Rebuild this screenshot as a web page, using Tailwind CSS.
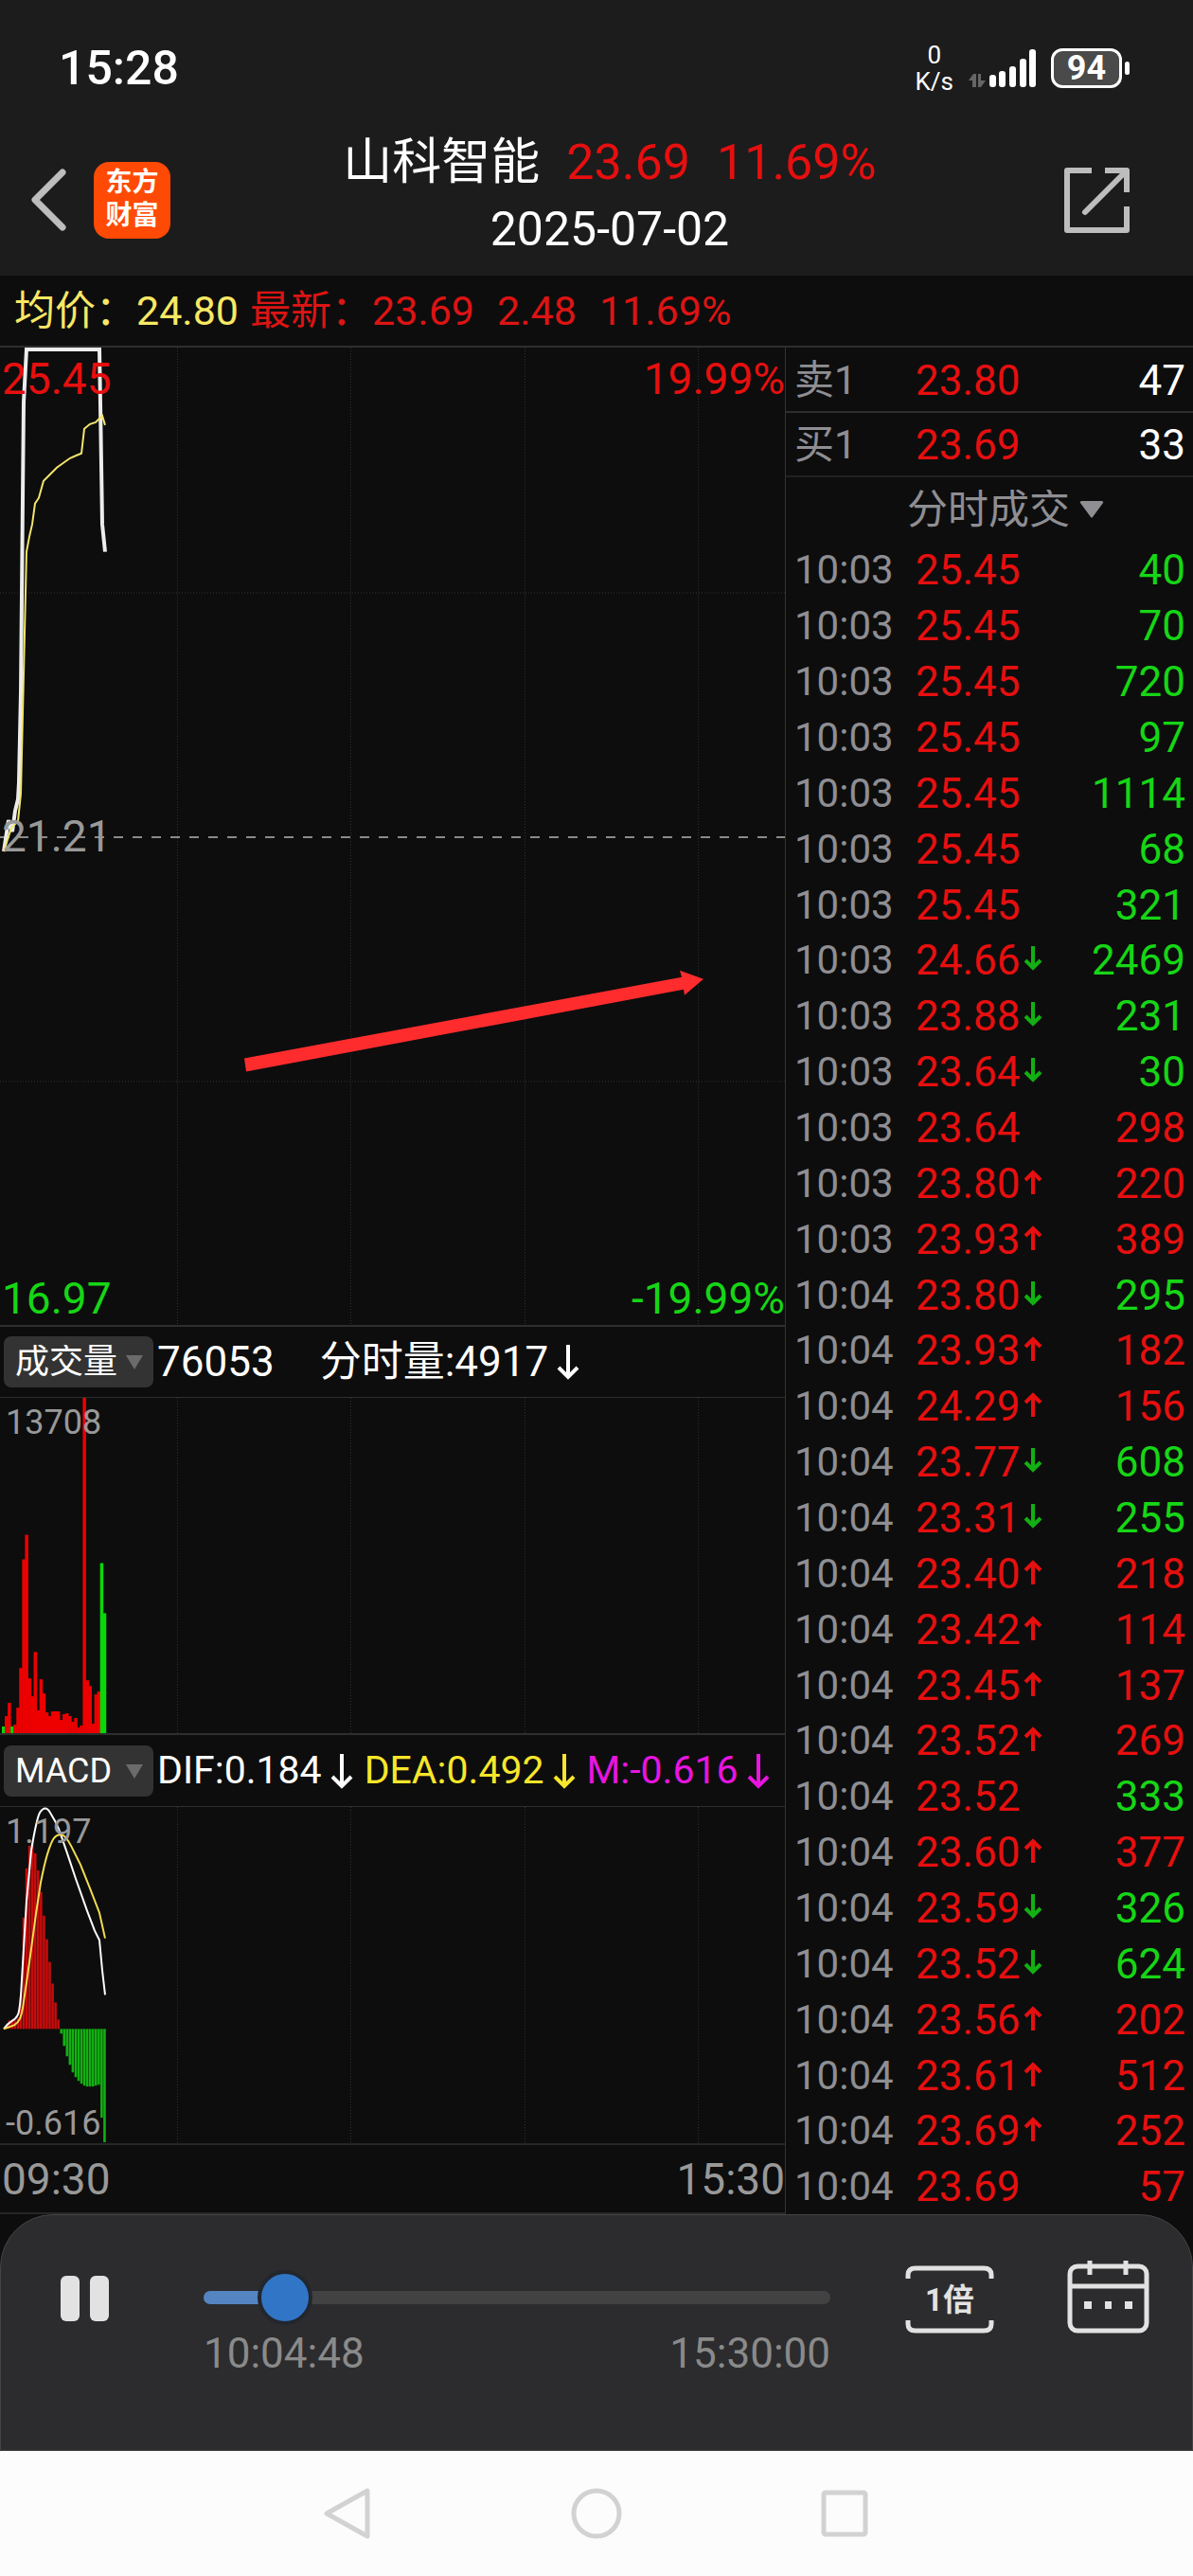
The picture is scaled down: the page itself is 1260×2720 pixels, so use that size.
<!DOCTYPE html>
<html lang="zh-CN">
<head>
  <meta charset="UTF-8" />
  <meta name="viewport" content="width=device-width, initial-scale=1.0" />
  <title>山科智能 分时回放</title>
  <script src="https://cdn.jsdelivr.net/npm/@tailwindcss/browser@4"></script>
</head>
<body class="bg-[#0d0d0d] text-white font-['Roboto','Noto_Sans_CJK_SC',sans-serif] text-[44px] leading-none">

  <header class="bg-[#1c1c1c] h-[291px]">
    <!-- status bar -->
    <div class="flex items-center justify-between h-[144px] pl-[62px] pr-[67px]">
      <span class="text-[50px] font-medium">15:28</span>
      <div class="flex items-center">
        <div class="flex flex-col items-center gap-[2px] text-[26px] leading-[26px] mr-4">
          <span>0</span>
          <span>K/s</span>
        </div>
        <svg class="w-[72px] h-[42px] mr-[15px]" viewBox="0 0 72 42" fill="#fff">
          <path d="M0 34L5 27H8V41H4V34ZM10 27H13V34H18L13 41H10Z" fill="#666" />
          <rect x="22" y="28" width="7" height="13" rx="3" />
          <rect x="32" y="24" width="7" height="17" rx="3" />
          <rect x="43" y="19" width="7" height="22" rx="3" />
          <rect x="54" y="11" width="7" height="30" rx="3" />
          <rect x="64" y="1" width="7" height="40" rx="3" />
        </svg>
        <div class="flex items-center justify-center w-[75px] h-[42px] rounded-[12px] border-[3px] border-white bg-[#4a4a4a] text-[36px] font-bold">94</div>
        <div class="w-[5px] h-[14px] ml-[3px] rounded-full bg-white"></div>
      </div>
    </div>
    <!-- title bar -->
    <div class="flex items-center pl-[33px] pr-[67px] h-[134px]">
      <button aria-label="返回" class="mr-[28px]">
        <svg class="w-[38px] h-[66px] block" viewBox="0 0 38 66" fill="none" stroke="#bdbdbd" stroke-width="7" stroke-linecap="round" stroke-linejoin="round"><path d="M33 4L4 33l29 29" /></svg>
      </button>
      <div class="w-[81px] h-[81px] rounded-[16px] bg-[#ff4a05] text-[28px] leading-[35px] font-bold text-center py-[4px]">东方<br />财富</div>
      <div class="grow flex flex-col items-center gap-[12px] mr-[16px] pb-[10px]">
        <h1 class="flex items-center gap-[28px] text-[52px] leading-[60px]">
          <span>山科智能</span>
          <span class="text-[#e60f0f]">23.69</span>
          <span class="text-[#e60f0f]">11.69%</span>
        </h1>
        <p class="text-[50px] leading-[56px]">2025-07-02</p>
      </div>
      <button aria-label="分享">
        <svg class="w-[69px] h-[69px] block" viewBox="0 0 69 69" fill="none" stroke="#bdbdbd" stroke-width="6" stroke-linejoin="round"><path d="M29 3H3v63h63V41M43 3h23v23" /><path d="M63 6L22 47" stroke-linecap="round" /></svg>
      </button>
    </div>
  </header>

  <div class="flex items-center h-[74px] pl-[15px] text-[43px]">
    <span class="text-[#f8e864] mr-[12px]">均价：24.80</span>
    <span class="text-[#dc1414] flex gap-[24px]"><span>最新：23.69</span><span>2.48</span><span>11.69%</span></span>
  </div>

  <main class="grid grid-cols-[829fr_431fr] border-t-2 border-[#2e2e2e]">
    <section>
      <!-- price -->
      <div class="relative h-[1034px] border-b-2 border-[#2e2e2e] text-[46px]">
        <svg class="w-full h-full block" viewBox="0 0 829 1034" preserveAspectRatio="none" fill="none">
          <path d="M187.500 0V1034M370.500 0V1034M554.500 0V1034M737.500 0V1034M0 259.500H829M0 776.500H829" stroke="#333" stroke-dasharray="1 2" />
          <path d="M0 518H829" stroke="#8a8a8a" stroke-width="2" stroke-dasharray="10 10" />
          <polyline points="4,533 9,500 13,512 16,490 19,478 20,460 22,365 25,58 28,2 105,2 106,60 108,187 111,216" stroke="#ececec" stroke-width="4" />
          <polyline points="4,533 12,508 19,501 22,472 25,345 28,216 31,200 34,187 37,165 41,159 46,141 53,134 60,127 67,122 74,117 81,114 86,112 89,86 95,81 101,79 108,72 111,82" stroke="#f3e56b" stroke-width="2" />
          <path d="M258 752L720 666L718 659L743 668L723 685L722 679L260 766Z" fill="#ff2c2e" />
        </svg>
        <span class="absolute left-[2px] top-[10px] text-[#e60f0f]">25.45</span>
        <span class="absolute right-0 top-[10px] text-[#e60f0f]">19.99%</span>
        <span class="absolute left-[2px] top-1/2 -translate-y-1/2 text-[#999]">21.21</span>
        <span class="absolute left-[2px] bottom-[5px] text-[#16d616]">16.97</span>
        <span class="absolute right-0 bottom-[5px] text-[#16d616]">-19.99%</span>
      </div>

      <!-- volume -->
      <div class="flex items-center h-[75px] pl-[4px] border-b border-[#2e2e2e]">
        <div class="relative mr-[4px]">
          <select aria-label="指标一" class="appearance-none block w-[158px] h-[54px] pl-[12px] rounded-[8px] bg-[#333] text-[36px]">
            <option>成交量</option>
          </select>
          <svg class="absolute right-[11px] top-[20px] w-[18px] h-[15px] pointer-events-none" viewBox="0 0 18 15" fill="#6b6b6b"><path d="M0 0h18L9 15z" /></svg>
        </div>
        <span class="mr-[48px]">76053</span>
        <span>分时量:4917</span>
        <svg class="w-[24px] h-[38px] ml-[9px]" viewBox="0 0 24 38" fill="none" stroke="#fff" stroke-width="4"><path d="M12 1v34M2 25l10 10 10-10" /></svg>
      </div>
      <div class="relative h-[356px] border-b-2 border-[#2e2e2e] text-[36px] text-[#999]">
        <svg class="w-full h-full block" viewBox="0 0 829 355" preserveAspectRatio="none">
          <path d="M187.500 0V355M370.500 0V355M554.500 0V355M737.500 0V355" stroke="#333" stroke-dasharray="1 2" />
          <g id="volumeBars"></g>
        </svg>
        <span class="absolute left-[6px] top-[8px]">13708</span>
      </div>

      <!-- macd -->
      <div class="flex items-center h-[76px] pl-[4px] border-b border-[#2e2e2e] text-[41px]">
        <div class="relative mr-[4px]">
          <select aria-label="指标二" class="appearance-none block w-[158px] h-[54px] pl-[12px] rounded-[8px] bg-[#333] text-[36px]">
            <option>MACD</option>
          </select>
          <svg class="absolute right-[11px] top-[20px] w-[18px] h-[15px] pointer-events-none" viewBox="0 0 18 15" fill="#6b6b6b"><path d="M0 0h18L9 15z" /></svg>
        </div>
        <span>DIF:0.184</span>
        <svg class="w-[24px] h-[38px] ml-[9px] mr-[12px]" viewBox="0 0 24 38" fill="none" stroke="#fff" stroke-width="4"><path d="M12 1v34M2 25l10 10 10-10" /></svg>
        <span class="text-[#f7e62b]">DEA:0.492</span>
        <svg class="w-[24px] h-[38px] ml-[9px] mr-[12px]" viewBox="0 0 24 38" fill="none" stroke="#f7e62b" stroke-width="4"><path d="M12 1v34M2 25l10 10 10-10" /></svg>
        <span class="text-[#e815e0]">M:-0.616</span>
        <svg class="w-[24px] h-[38px] ml-[9px]" viewBox="0 0 24 38" fill="none" stroke="#e815e0" stroke-width="4"><path d="M12 1v34M2 25l10 10 10-10" /></svg>
      </div>
      <div class="relative h-[357px] border-b-2 border-[#262626] text-[36px] text-[#999]">
        <svg class="w-full h-full block" viewBox="0 0 829 356" preserveAspectRatio="none" fill="none">
          <path d="M187.500 0V356M370.500 0V356M554.500 0V356M737.500 0V356" stroke="#333" stroke-dasharray="1 2" />
          <g id="macdBars"></g>
          <path d="M4 235C8 229 12 227 15 225C19 221 20 222 22 200L25 150L28 100L33 46C36 28 39 12 42 6Q48-3 53 6Q58 14 62 23L70 46L80 76L92 110L100 131L105 141L108 173L111 199" stroke="#fff" stroke-width="2" />
          <path d="M4 235L15 231C20 228 22 224 24 213L28 186L33 150L38 113L43 80Q47 60 50 50Q54 37 57 33Q62 27 68 31Q72 35 75 41L85 61L95 86L105 112L111 139" stroke="#f3dc50" stroke-width="2" />
        </svg>
        <span class="absolute left-[6px] top-[8px]">1.197</span>
        <span class="absolute left-[6px] bottom-[3px]">-0.616</span>
      </div>

      <div class="flex items-center justify-between h-[73px] pl-[2px] border-b-2 border-[#262626] text-[46px] text-[#999]">
        <span>09:30</span>
        <span>15:30</span>
      </div>
    </section>

    <aside class="border-l border-[#333] text-[#8e8e93] text-[42px]">
      <dl>
        <div class="flex items-center h-[69px] pt-[2px] pl-[9px] pr-[8px] border-b-2 border-[#2e2e2e]">
          <dt class="w-[128px]">卖1</dt>
          <dd class="grow text-[44px] text-[#e60f0f]">23.80</dd>
          <dd class="text-[44px] text-white">47</dd>
        </div>
        <div class="flex items-center h-[68px] pt-[2px] pl-[9px] pr-[8px] border-b-2 border-[#222]">
          <dt class="w-[128px]">买1</dt>
          <dd class="grow text-[44px] text-[#e60f0f]">23.69</dd>
          <dd class="text-[44px] text-white">33</dd>
        </div>
      </dl>
      <div class="flex items-center h-[68px] pl-[128px]">
        <select aria-label="成交类型" class="appearance-none bg-transparent text-[43px]">
          <option>分时成交</option>
        </select>
        <svg class="w-[26px] h-[18px] ml-[10px]" viewBox="0 0 26 18" fill="#8e8e93"><path d="M2 0h22q2 1 1 2L14 17q-1 1-2 0L1 2q-1-1 1-2z" /></svg>
      </div>
      <table class="w-full h-[1766px]">
        <tbody id="trades"></tbody>
      </table>
    </aside>
  </main>

  <!-- replay controls -->
  <footer>
    <div class="flex items-start h-[250px] pl-[63px] pr-[45px] rounded-t-[56px] border border-[#444] bg-[#2c2c2e]">
      <button aria-label="暂停" class="mt-[64px] mr-[99px]">
        <svg class="w-[52px] h-[48px] block" viewBox="0 0 52 48" fill="#e2e2e2"><rect x="0" y="0" width="20" height="48" rx="6" /><rect x="31" y="0" width="20" height="48" rx="6" /></svg>
      </button>
      <div class="grow mt-[58px] mr-[79px] text-[44px] text-[#8a8a8a]">
        <input id="progress" type="range" min="0" max="1000" value="94" aria-label="回放进度"
          class="appearance-none block w-full h-[58px] bg-transparent
            [&::-webkit-slider-runnable-track]:h-[14px] [&::-webkit-slider-runnable-track]:rounded-full
            [&::-webkit-slider-runnable-track]:bg-[linear-gradient(to_right,#5585c0_var(--played),#424242_var(--played))]
            [&::-webkit-slider-thumb]:appearance-none [&::-webkit-slider-thumb]:size-[58px] [&::-webkit-slider-thumb]:-mt-[22px]
            [&::-webkit-slider-thumb]:rounded-full [&::-webkit-slider-thumb]:border-4 [&::-webkit-slider-thumb]:border-solid
            [&::-webkit-slider-thumb]:border-[#22262d] [&::-webkit-slider-thumb]:bg-[#3175c6]" />
        <div class="flex justify-between mt-[8px]">
          <span>10:04:48</span>
          <span>15:30:00</span>
        </div>
      </div>
      <button class="relative w-[94px] h-[74px] mt-[52px] mr-[77px] text-[33px] font-bold text-[#e2e2e2]">
        <svg class="absolute inset-0 w-full h-full" viewBox="0 0 94 74" fill="none" stroke="#e2e2e2" stroke-width="5"><path d="M3 15V11Q3 4 11 4H83Q91 4 91 11V15M3 59V63Q3 70 11 70H83Q91 70 91 63V59" /></svg>
        1倍
      </button>
      <button aria-label="选择日期" class="mt-[48px]">
        <svg class="w-[87px] h-[78px] block" viewBox="0 0 87 78" fill="none" stroke="#e2e2e2" stroke-width="5">
          <rect x="3" y="6" width="81" height="68" rx="8" />
          <path d="M3 27H84M24 0V15M62 0V15" />
          <path d="M18 47H26M40 47H47M61 47H69" stroke-width="8" />
        </svg>
      </button>
    </div>
    <nav class="flex items-center justify-center gap-[210px] h-[132px] bg-[#fcfcfc]">
      <button aria-label="后退"><svg class="w-[52px] h-[56px] block" viewBox="0 0 52 56" fill="none" stroke="#d2d2d2" stroke-width="5" stroke-linejoin="round"><path d="M47 4V52L4 28Z" /></svg></button>
      <button aria-label="主页"><svg class="w-[54px] h-[56px] block" viewBox="0 0 54 56" fill="none" stroke="#d2d2d2" stroke-width="5"><circle cx="27" cy="28" r="24" /></svg></button>
      <button aria-label="最近任务"><svg class="w-[52px] h-[56px] block" viewBox="0 0 52 56" fill="none" stroke="#d2d2d2" stroke-width="5"><rect x="3" y="6" width="44" height="44" rx="2" /></svg></button>
    </nav>
  </footer>

  <script>
    const RED = "#e60f0f";

    // time, price, direction, volume, side
    const trades = [
      ["10:03", "25.45", "", 40, "sell"],
      ["10:03", "25.45", "", 70, "sell"],
      ["10:03", "25.45", "", 720, "sell"],
      ["10:03", "25.45", "", 97, "sell"],
      ["10:03", "25.45", "", 1114, "sell"],
      ["10:03", "25.45", "", 68, "sell"],
      ["10:03", "25.45", "", 321, "sell"],
      ["10:03", "24.66", "down", 2469, "sell"],
      ["10:03", "23.88", "down", 231, "sell"],
      ["10:03", "23.64", "down", 30, "sell"],
      ["10:03", "23.64", "", 298, "buy"],
      ["10:03", "23.80", "up", 220, "buy"],
      ["10:03", "23.93", "up", 389, "buy"],
      ["10:04", "23.80", "down", 295, "sell"],
      ["10:04", "23.93", "up", 182, "buy"],
      ["10:04", "24.29", "up", 156, "buy"],
      ["10:04", "23.77", "down", 608, "sell"],
      ["10:04", "23.31", "down", 255, "sell"],
      ["10:04", "23.40", "up", 218, "buy"],
      ["10:04", "23.42", "up", 114, "buy"],
      ["10:04", "23.45", "up", 137, "buy"],
      ["10:04", "23.52", "up", 269, "buy"],
      ["10:04", "23.52", "", 333, "sell"],
      ["10:04", "23.60", "up", 377, "buy"],
      ["10:04", "23.59", "down", 326, "sell"],
      ["10:04", "23.52", "down", 624, "sell"],
      ["10:04", "23.56", "up", 202, "buy"],
      ["10:04", "23.61", "up", 512, "buy"],
      ["10:04", "23.69", "up", 252, "buy"],
      ["10:04", "23.69", "", 57, "buy"]
    ];

    // bar heights per minute, green minutes listed apart
    const volume = [7, 18, 32, 7, 9, 27, 69, 184, 210, 58, 39, 86, 24, 57, 42, 22, 18, 23, 23, 23, 14, 20, 21, 18, 12, 16, 6, 8, 355, 56, 50, 10, 41, 44, 180, 127];
    const fallingMinutes = [0, 3, 34, 35];
    const macd = [0, 2, 9, 8, 9, 12, 35, 118, 170, 194, 197, 186, 168, 145, 120, 95, 71, 48, 28, 10, -5, -18, -29, -38, -46, -51, -55, -58, -60, -61, -61, -61, -60, -59, -94, -120];

    const arrows = {
      "": "",
      up: `<svg class="inline-block w-[20px] h-[28px] ml-[3px] align-[3px]" viewBox="0 0 20 28" fill="none" stroke="${RED}" stroke-width="4"><path d="M10 27V4M2 12l8-8 8 8" /></svg>`,
      down: `<svg class="inline-block w-[20px] h-[28px] ml-[3px] align-[3px]" viewBox="0 0 20 28" fill="none" stroke="#12b012" stroke-width="4"><path d="M10 1v23M2 16l8 8 8-8" /></svg>`
    };

    document.getElementById("trades").innerHTML = trades.map(([time, price, dir, vol, side]) => `
      <tr>
        <td class="w-[137px] p-0 pt-[2px] pl-[9px]">${time}</td>
        <td class="p-0 pt-[2px] text-[44px] text-[#e60f0f]">${price}${arrows[dir]}</td>
        <td class="p-0 pt-[2px] pr-[8px] text-right text-[44px] ${side === "buy" ? "text-[#e60f0f]" : "text-[#16d616]"}">${vol}</td>
      </tr>
    `).join("");

    document.getElementById("volumeBars").innerHTML = volume.map((h, i) => {
      const x = 2 + i * 3.05;
      return `<rect x="${x}" y="${355 - h}" width="3.5" height="${h}" fill="${fallingMinutes.includes(i) ? "#08d808" : "#ee0000"}" />`;
    }).join("");

    document.getElementById("macdBars").innerHTML = macd.map((h, i) => {
      const x = 2.4 + i * 3.05;
      const y = h > 0 ? 235 - h : 235;
      return `<rect x="${x}" y="${y}" width="2.6" height="${Math.abs(h)}" fill="${h > 0 ? "#c80c0c" : "#12b012"}" />`;
    }).join("");

    const progress = document.getElementById("progress");
    function paintProgress() {
      progress.style.setProperty("--played", progress.value / progress.max * 100 + "%");
    }
    progress.addEventListener("input", paintProgress);
    paintProgress();
  </script>
</body>
</html>
